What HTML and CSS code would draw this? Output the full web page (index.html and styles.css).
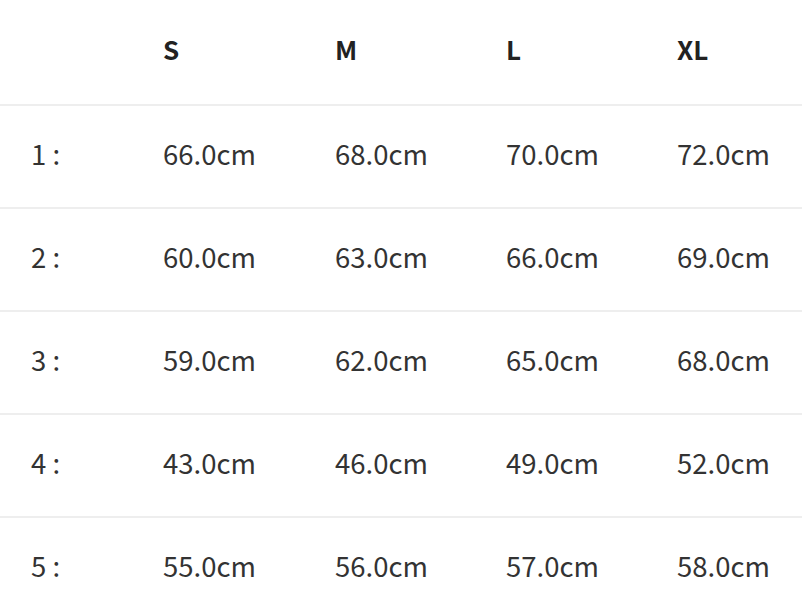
FILE: index.html
```html
<!DOCTYPE html>
<html>
<head>
<meta charset="utf-8">
<link rel="stylesheet" href="styles.css">
</head>
<body>
<div class="size-table">
  <div class="row head">
    <div class="cell"></div>
    <div class="cell">S</div>
    <div class="cell">M</div>
    <div class="cell">L</div>
    <div class="cell">XL</div>
  </div>
  <div class="row">
    <div class="cell">1 :</div>
    <div class="cell">66.0cm</div>
    <div class="cell">68.0cm</div>
    <div class="cell">70.0cm</div>
    <div class="cell">72.0cm</div>
  </div>
  <div class="row">
    <div class="cell">2 :</div>
    <div class="cell">60.0cm</div>
    <div class="cell">63.0cm</div>
    <div class="cell">66.0cm</div>
    <div class="cell">69.0cm</div>
  </div>
  <div class="row">
    <div class="cell">3 :</div>
    <div class="cell">59.0cm</div>
    <div class="cell">62.0cm</div>
    <div class="cell">65.0cm</div>
    <div class="cell">68.0cm</div>
  </div>
  <div class="row">
    <div class="cell">4 :</div>
    <div class="cell">43.0cm</div>
    <div class="cell">46.0cm</div>
    <div class="cell">49.0cm</div>
    <div class="cell">52.0cm</div>
  </div>
  <div class="row">
    <div class="cell">5 :</div>
    <div class="cell">55.0cm</div>
    <div class="cell">56.0cm</div>
    <div class="cell">57.0cm</div>
    <div class="cell">58.0cm</div>
  </div>
</div>
</body>
</html>
```
FILE: styles.css
```css
html, body {
  margin: 0;
  padding: 0;
  background: #ffffff;
}
body {
  font-family: "Noto Sans CJK SC", "Noto Sans", sans-serif;
  color: #333333;
  overflow: hidden;
  width: 802px;
  height: 600px;
}
.size-table {
  display: flex;
  flex-direction: column;
}
.row {
  display: grid;
  grid-template-columns: 132px 172px 171px 171px auto;
  box-sizing: border-box;
  padding-left: 31px;
  padding-bottom: 5px;
  height: 103px;
  align-items: center;
  border-bottom: 2px solid #eeeeee;
  font-size: 27.5px;
  line-height: 1;
}
.row.head {
  height: 106px;
  padding-bottom: 6px;
  font-weight: bold;
  font-size: 26px;
  color: #222222;
}
.cell {
  white-space: nowrap;
}
```
